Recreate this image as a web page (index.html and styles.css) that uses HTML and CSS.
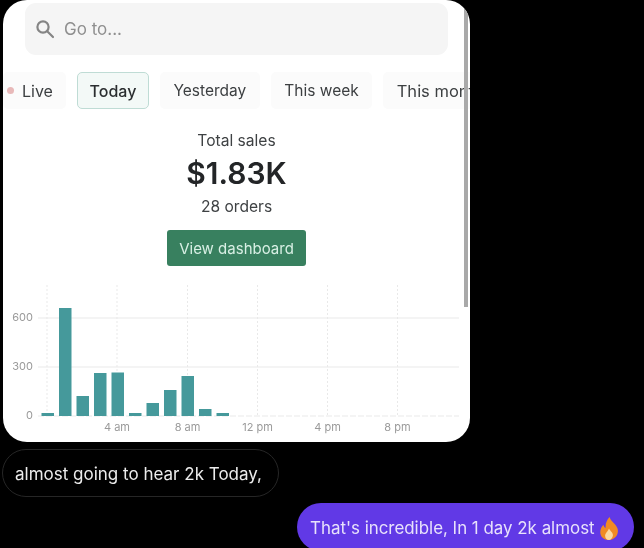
FILE: index.html
```html
<!DOCTYPE html>
<html lang="en">

<head>
  <meta charset="UTF-8" />
  <meta name="viewport" content="width=device-width, initial-scale=1.0" />
  <title>Total sales</title>
  <link rel="stylesheet" href="styles.css">
</head>

<body>
  <div class="card">
    <!-- search -->
    <div class="search">
      <svg class="search-icon" width="20" height="20" viewBox="0 0 20 20" fill="none" stroke="#858585" stroke-width="2.2">
        <circle cx="8" cy="8" r="5.6" />
        <path d="M12.2 12.2 18 18" stroke-linecap="round" />
      </svg>
      <span>Go to...</span>
    </div>

    <!-- date tabs -->
    <div class="tabs">
      <div class="tab tab-live"><i class="dot"></i>Live</div>
      <div class="tab active">Today</div>
      <div class="tab">Yesterday</div>
      <div class="tab">This week</div>
      <div class="tab tab-month">This month</div>
    </div>

    <div class="summary">
      <p class="summary-label">Total sales</p>
      <p class="summary-value">$1.83K</p>
      <p class="summary-label">28 orders</p>
      <button class="view-btn">View dashboard</button>
    </div>

    <!-- viewBox uses the same numbers as the screen so the bars are easy to read off -->
    <svg class="chart" viewBox="3 280 467 162" width="467" height="162">
      <g stroke="#e9e9e9" stroke-width="1">
        <path d="M38 318H459M38 367H459" />
        <path d="M38 416H459" stroke-dasharray="6 2" />
        <path d="M47 285V416M117 285V416M187.5 285V416M257.5 285V416M327.5 285V416M397.5 285V416" stroke-dasharray="2 2" />
      </g>
      <g fill="#45999b">
        <rect x="41.5" y="413" width="12.5" height="3" />
        <rect x="59" y="308" width="12.5" height="108" />
        <rect x="76.5" y="396" width="12.5" height="20" />
        <rect x="94" y="373" width="12.5" height="43" />
        <rect x="111.5" y="372.5" width="12.5" height="43.5" />
        <rect x="129" y="413" width="12.5" height="3" />
        <rect x="146.5" y="403" width="12.5" height="13" />
        <rect x="164" y="390" width="12.5" height="26" />
        <rect x="181.5" y="376" width="12.5" height="40" />
        <rect x="199" y="409" width="12.5" height="7" />
        <rect x="216.5" y="413" width="12.5" height="3" />
      </g>
      <g class="axis axis-y">
        <text x="33" y="321">600</text>
        <text x="33" y="370">300</text>
        <text x="33" y="419">0</text>
      </g>
      <g class="axis axis-x">
        <text x="117" y="431">4 am</text>
        <text x="187.5" y="431">8 am</text>
        <text x="257.5" y="431">12 pm</text>
        <text x="327.5" y="431">4 pm</text>
        <text x="397.5" y="431">8 pm</text>
      </g>
    </svg>

    <div class="scrollbar"></div>
  </div>

  <div class="messages">
    <div class="bubble bubble-in">almost going to hear 2k Today,</div>
    <div class="bubble bubble-out">
      That's incredible, In 1 day 2k almost
      <svg width="20" height="23" viewBox="0 0 18 22" preserveAspectRatio="none">
        <path d="M9.5 0C10.5 4 15 6.500 16.500 10.500 18.500 16 14.500 22 9 22 3.500 22 0 17.500 1.500 12 2 10 3 8.500 4 7.500 4.300 9 5 10 6 10.500 5.500 6.500 7 3 9.500 0Z" fill="#f08a24" />
        <path d="M9 11C10 13.500 13 15 12.500 18 12 20.500 10.500 22 9 22 7 22 5.500 20.500 5.500 18 5.500 15.500 8 14 9 11Z" fill="#fbd9a0" />
      </svg>
    </div>
  </div>
</body>

</html>
```

FILE: styles.css
```css
* {
  margin: 0;
  padding: 0;
  box-sizing: border-box;
}

body {
  width: 644px;
  height: 548px;
  overflow: hidden;
  background: #000;
  font-family: Inter, "Liberation Sans", sans-serif;
}

.card {
  position: relative;
  width: 467px;
  height: 442px;
  margin-left: 3px;
  padding-top: 3px;
  background: #fff;
  border-radius: 24px;
  overflow: hidden;
  filter: blur(0.35px);
}

.search {
  display: flex;
  align-items: center;
  gap: 9px;
  width: 423px;
  height: 52px;
  margin-left: 22px;
  padding-left: 10px;
  background: #f5f5f5;
  border-radius: 11px;
  color: #8f8f8f;
  font-size: 17px;
}

.tabs {
  display: flex;
  gap: 11px;
  height: 37px;
  margin-top: 17px;
  white-space: nowrap;
}

.tab {
  display: flex;
  align-items: center;
  flex-shrink: 0;
  padding: 0 13.5px;
  background: #fbfbfb;
  border-radius: 5px;
  color: #3c3f41;
  font-size: 15.5px;
}

.tab-live {
  width: 63px;
  padding: 0 0 0 4px;
  gap: 8px;
  font-size: 16px;
}

.tab-month {
  font-size: 16.5px;
}

.dot {
  width: 7px;
  height: 7px;
  border-radius: 50%;
  background: #e8b9b9;
}

.tab.active {
  width: 72px;
  padding: 0;
  justify-content: center;
  border: 1.5px solid #bfdcd5;
  background: #f3f9f7;
  color: #2b2e30;
  font-size: 16px;
  font-weight: 500;
}

.summary {
  display: flex;
  flex-direction: column;
  align-items: center;
  margin-top: 20px;
}

.summary-label {
  color: #3f4244;
  font-size: 15.6px;
  line-height: 24px;
}

.summary-value {
  margin-bottom: 2px;
  color: #232527;
  font-size: 30px;
  font-weight: 600;
  line-height: 40px;
}

.view-btn {
  width: 139px;
  height: 36px;
  margin-top: 11px;
  border: none;
  border-radius: 3px;
  background: #38805f;
  color: #d8efe4;
  font: 15px Inter, "Liberation Sans", sans-serif;
}

.chart {
  display: block;
  margin-top: 14px;
}

.axis {
  fill: #9a9a9a;
  font-size: 11px;
}

.axis-y {
  text-anchor: end;
}

.axis-x {
  text-anchor: middle;
}

/* sits over the card's right edge */
.scrollbar {
  position: absolute;
  top: 0;
  right: 2px;
  width: 4px;
  height: 307px;
  background: #a9a9a9;
}

.messages {
  display: flex;
  flex-direction: column;
  filter: blur(0.35px);
}

.bubble {
  display: flex;
  align-items: center;
  height: 48px;
  padding-top: 2px;
  border-radius: 24px;
  font-size: 17px;
  white-space: nowrap;
}

.bubble-in {
  width: 277px;
  margin: 7px 0 0 2px;
  padding-left: 12px;
  border: 1px solid #262626;
  color: #ececec;
}

.bubble-out {
  gap: 4px;
  width: 337px;
  margin: 6px 0 0 297px;
  padding-left: 13px;
  background: #6139e6;
  color: #e8e2fb;
  font-size: 16.9px;
}
```
